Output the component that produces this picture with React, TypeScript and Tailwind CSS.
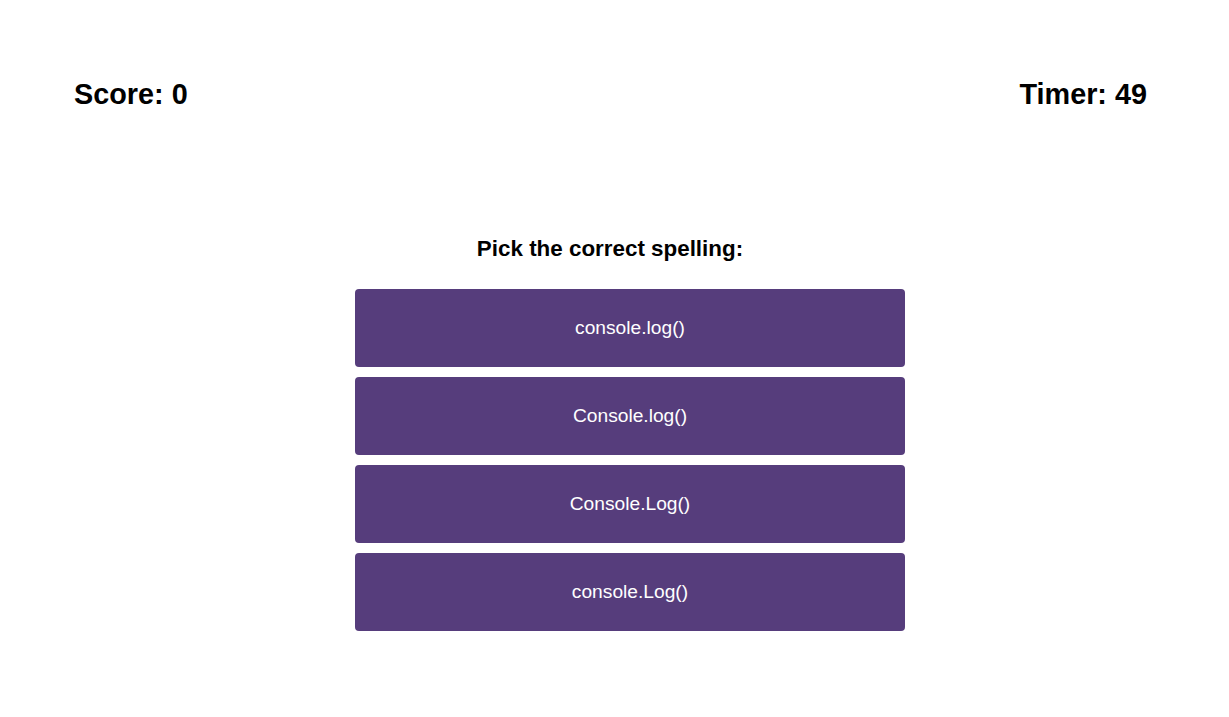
const choices = ["console.log()", "Console.log()", "Console.Log()", "console.Log()"];

export default function App() {
  return (
    <div
      className="min-h-screen w-full bg-white pl-[73px] pr-[82px] pt-[78px] text-black"
      style={{ fontFamily: '"Liberation Sans", Arial, sans-serif' }}
    >
      <header className="flex items-start justify-between">
        <h2 className="ml-px text-[28.8px] font-bold leading-[32px]">Score: 0</h2>
        <h2 className="text-[28.8px] font-bold leading-[32px]">Timer: 49</h2>
      </header>

      <main className="mt-[126px]">
        <p className="text-center text-[22.4px] font-bold leading-[25px]">Pick the correct spelling:</p>
        <div className="ml-[282px] mt-[28px] flex w-[550px] flex-col gap-[10px]">
          {choices.map((choice) => (
            <button
              key={choice}
              className="flex h-[78px] w-full items-center justify-center rounded-[4px] bg-[#563d7c] text-[19.2px] text-white"
            >
              {choice}
            </button>
          ))}
        </div>
      </main>
    </div>
  );
}
